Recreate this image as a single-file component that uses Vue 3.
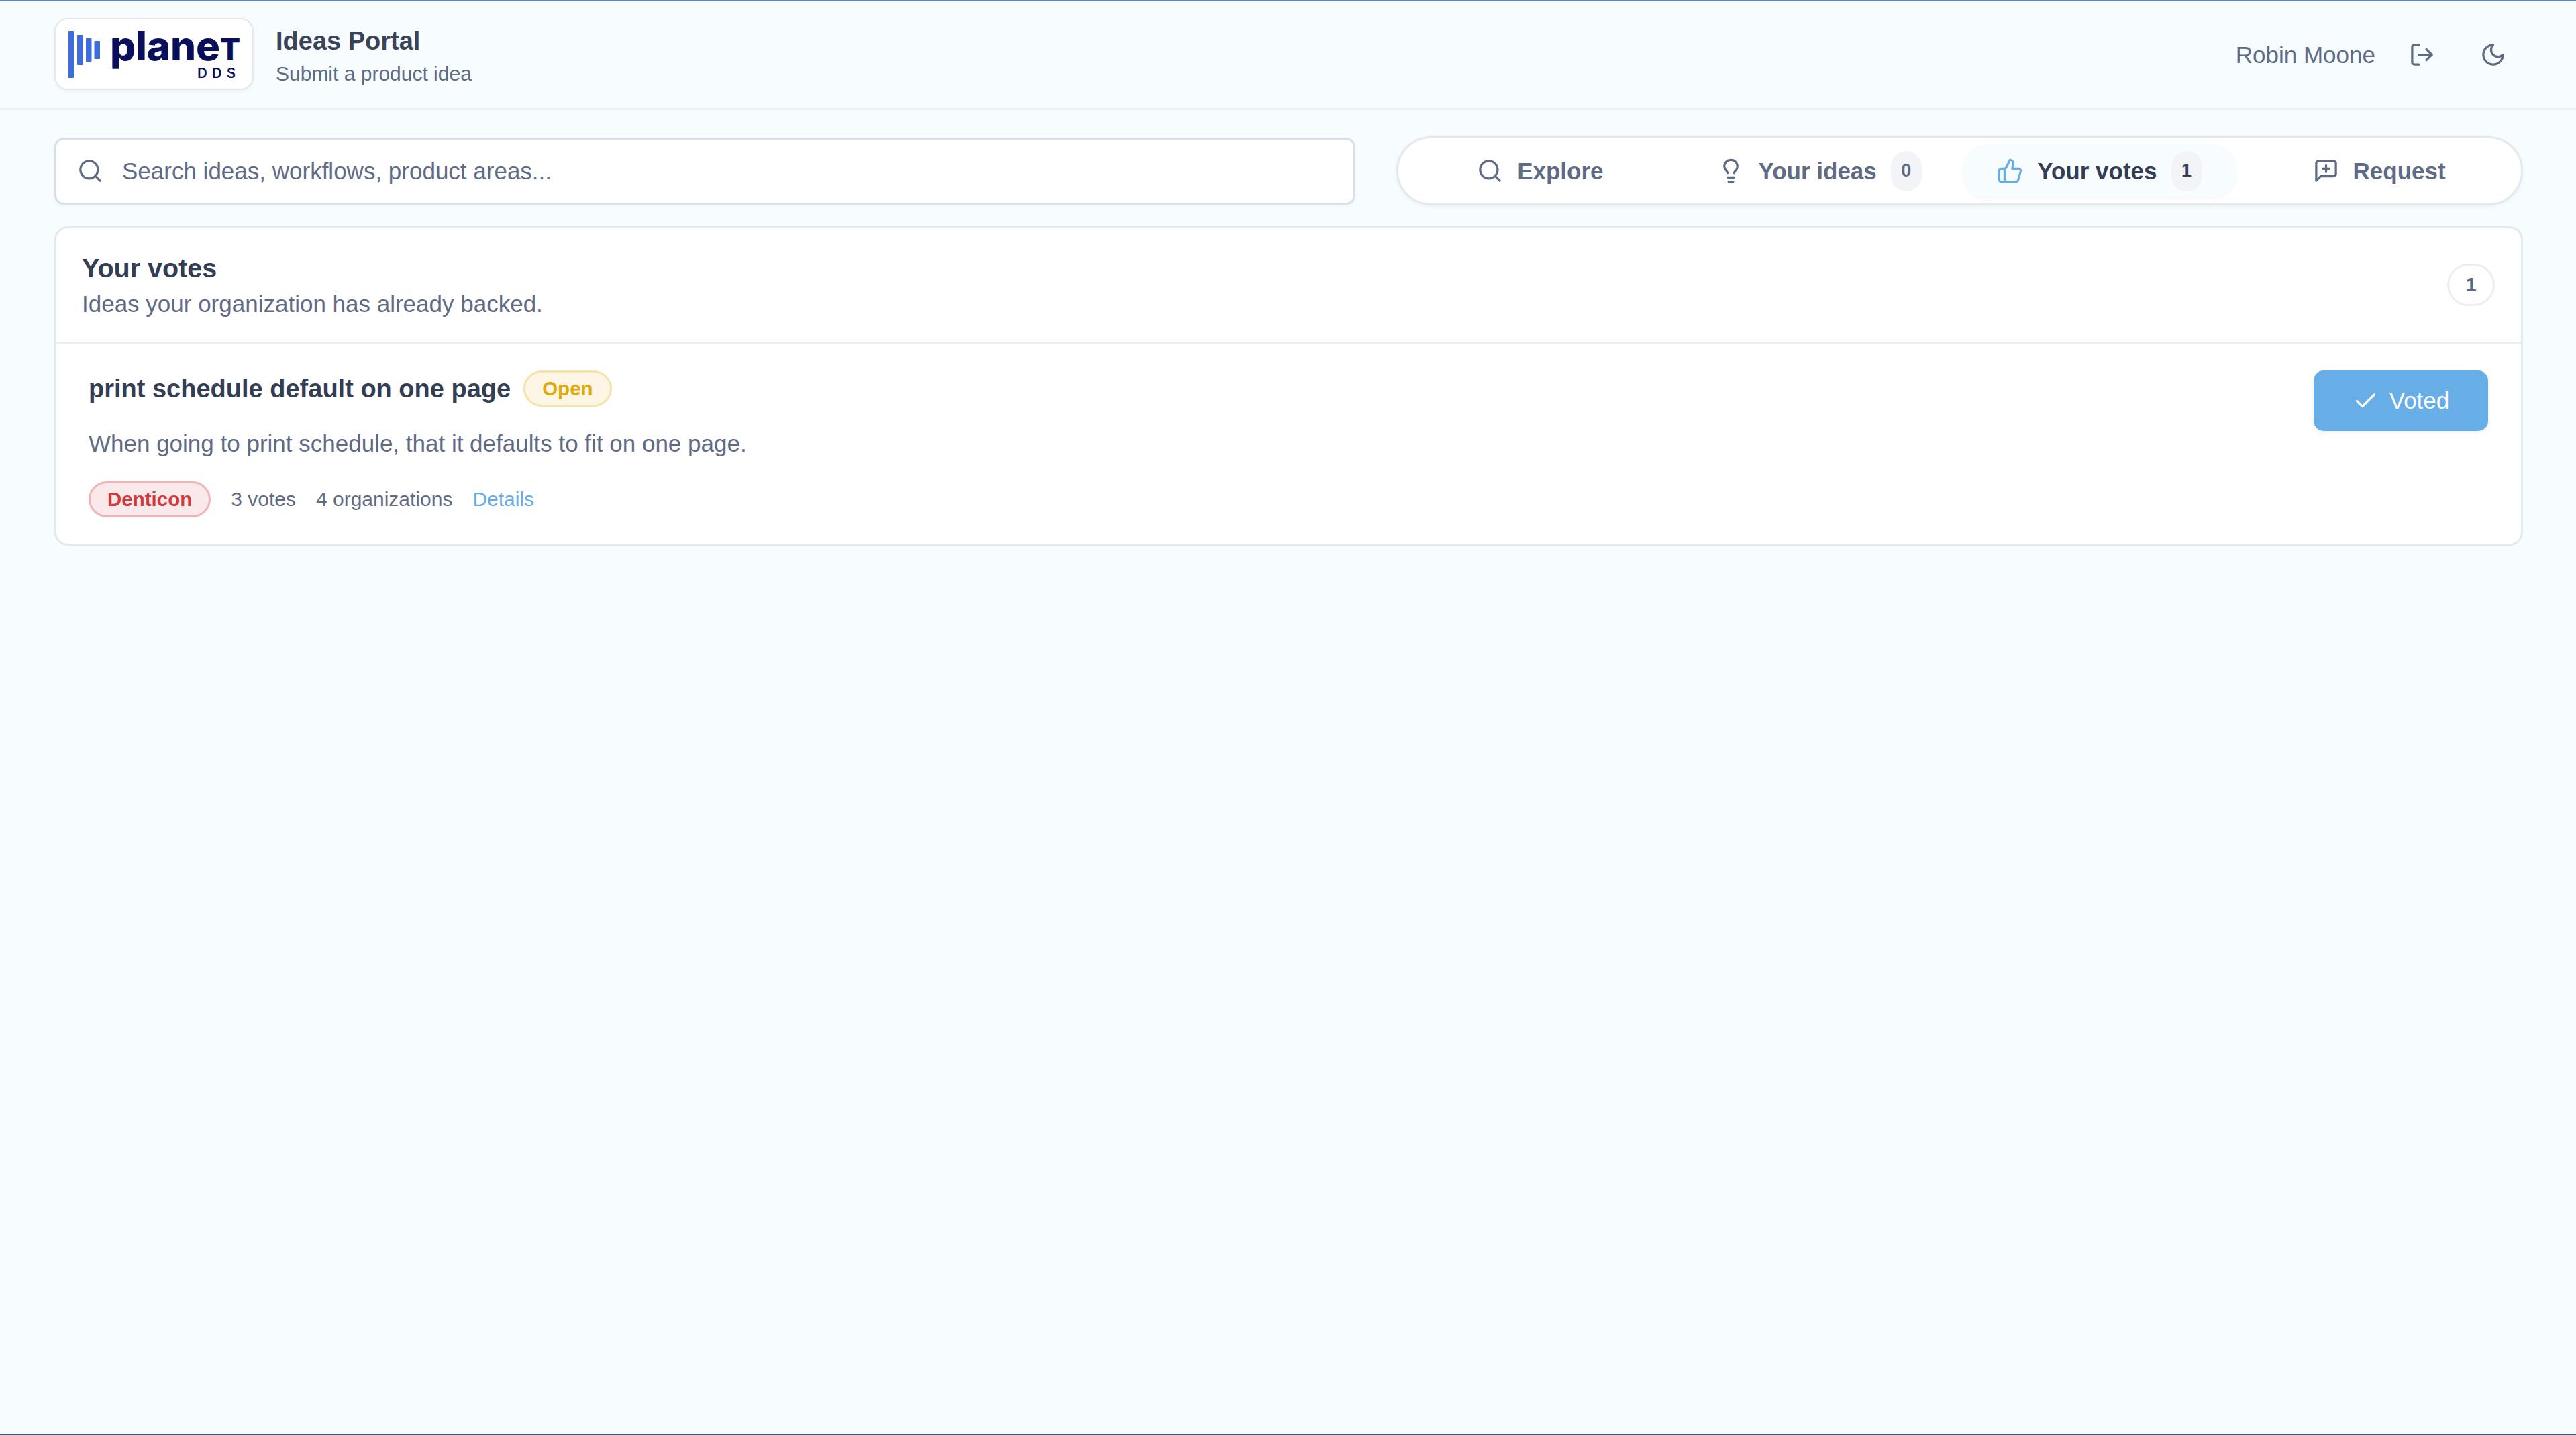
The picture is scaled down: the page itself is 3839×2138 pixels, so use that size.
<template>
  <div class="page">
    <header class="topbar">
      <div class="brand">
        <div class="logo">
          <svg class="logo-bars" viewBox="0 0 47 70" width="47" height="70">
            <rect x="0" y="0" width="8" height="70" rx="1" />
            <rect x="13" y="6" width="8.5" height="45" rx="1" />
            <rect x="26" y="11" width="8.5" height="35" rx="1" />
            <rect x="38.5" y="15" width="8.5" height="27" rx="1" />
          </svg>
          <div class="logo-text">
            <span class="logo-word">plane<span class="logo-t">T</span></span>
            <span class="logo-dds">DDS</span>
          </div>
        </div>
        <div class="brand-copy">
          <h1 class="brand-title">Ideas Portal</h1>
          <p class="brand-sub">Submit a product idea</p>
        </div>
      </div>
      <div class="user">
        <span class="user-name">Robin Moone</span>
        <button class="icon-btn" type="button" aria-label="Sign out">
          <svg class="icon" viewBox="0 0 24 24">
            <path d="M9 21H5a2 2 0 0 1-2-2V5a2 2 0 0 1 2-2h4" />
            <path d="M16 17l5-5-5-5" />
            <path d="M21 12H9" />
          </svg>
        </button>
        <button class="icon-btn" type="button" aria-label="Toggle theme">
          <svg class="icon" viewBox="0 0 24 24">
            <path d="M12 3a6 6 0 0 0 9 9 9 9 0 1 1-9-9Z" />
          </svg>
        </button>
      </div>
    </header>

    <main class="content">
      <div class="toolbar">
        <label class="search">
          <svg class="icon" viewBox="0 0 24 24">
            <circle cx="11" cy="11" r="8" />
            <path d="m21 21-4.3-4.3" />
          </svg>
          <input v-model="query" type="text" placeholder="Search ideas, workflows, product areas..." />
        </label>
        <nav class="tabs">
          <button
            v-for="tab in tabs"
            :key="tab.label"
            type="button"
            class="tab"
            :class="{ active: tab.label === current }"
            @click="current = tab.label"
          >
            <svg class="icon" viewBox="0 0 24 24">
              <path v-for="d in tab.paths" :key="d" :d="d" />
            </svg>
            <span>{{ tab.label }}</span>
            <span v-if="tab.count !== undefined" class="tab-count">{{ tab.count }}</span>
          </button>
        </nav>
      </div>

      <section class="card">
        <div class="card-head">
          <div>
            <h2 class="card-title">Your votes</h2>
            <p class="card-sub">Ideas your organization has already backed.</p>
          </div>
          <span class="card-count">1</span>
        </div>
        <article class="idea">
          <div class="idea-body">
            <div class="idea-title-row">
              <h3 class="idea-title">print schedule default on one page</h3>
              <span class="status">Open</span>
            </div>
            <p class="idea-desc">When going to print schedule, that it defaults to fit on one page.</p>
            <div class="idea-meta">
              <span class="product">Denticon</span>
              <span>3 votes</span>
              <span>4 organizations</span>
              <a class="details" href="#">Details</a>
            </div>
          </div>
          <button class="voted" type="button">
            <svg class="icon" viewBox="0 0 24 24">
              <path d="M20 6 9 17l-5-5" />
            </svg>
            Voted
          </button>
        </article>
      </section>
    </main>
  </div>
</template>

<script setup>
import { ref } from "vue";

const query = ref("");
const current = ref("Your votes");

const tabs = [
  {
    label: "Explore",
    paths: ["M19 11a8 8 0 1 1-16 0 8 8 0 0 1 16 0Z", "m21 21-4.3-4.3"],
  },
  {
    label: "Your ideas",
    count: 0,
    paths: [
      "M15 14c.2-1 .7-1.7 1.5-2.5 1-.9 1.5-2.2 1.5-3.5A6 6 0 0 0 6 8c0 1 .2 2.2 1.5 3.5.7.7 1.3 1.5 1.5 2.5",
      "M9 18h6",
      "M10 22h4",
    ],
  },
  {
    label: "Your votes",
    count: 1,
    paths: [
      "M7 10v12",
      "M15 5.88 14 10h5.83a2 2 0 0 1 1.92 2.56l-2.33 8A2 2 0 0 1 17.5 22H4a2 2 0 0 1-2-2v-8a2 2 0 0 1 2-2h2.76a2 2 0 0 0 1.79-1.11L12 2a3.13 3.13 0 0 1 3 3.88Z",
    ],
  },
  {
    label: "Request",
    paths: [
      "M21 15a2 2 0 0 1-2 2H7l-4 4V5a2 2 0 0 1 2-2h14a2 2 0 0 1 2 2z",
      "M12 7v6",
      "M9 10h6",
    ],
  },
];
</script>

<style>
html,
body {
  margin: 0;
  background: #f7fcff;
}
</style>

<style scoped>
.page {
  min-height: 100vh;
  box-sizing: border-box;
  background: #f7fcff;
  border-top: 2px solid #5b83bb;
  border-bottom: 2px solid #2f5a8f;
  font-family: "Liberation Sans", Arial, sans-serif;
  color: #5f6b85;
}

h1,
h2,
h3,
p {
  margin: 0;
}

button {
  font-family: inherit;
  border: none;
  background: none;
  cursor: pointer;
}

.icon {
  width: 39px;
  height: 39px;
  flex: none;
  fill: none;
  stroke: currentColor;
  stroke-width: 2;
  stroke-linecap: round;
  stroke-linejoin: round;
}

/* top bar */
.topbar {
  height: 159px;
  display: flex;
  align-items: center;
  justify-content: space-between;
  padding: 0 104px 0 81px;
  border-bottom: 3px solid #e9eef3;
}

.brand {
  display: flex;
  align-items: center;
  gap: 33px;
}

.logo {
  width: 297px;
  height: 107px;
  box-sizing: border-box;
  display: flex;
  align-items: flex-start;
  gap: 16px;
  margin-top: -2px;
  padding: 17px 0 0 19px;
  background: #fff;
  border: 2px solid #e4e8ef;
  border-radius: 20px;
  box-shadow: 0 2px 5px rgba(40, 60, 90, 0.06);
}

.logo-bars {
  flex: none;
  fill: #3f6bdc;
}

.logo-text {
  display: flex;
  flex-direction: column;
  align-items: flex-end;
  width: 193px;
  color: #0a0f5c;
}

.logo-word {
  font-family: Inter, "Liberation Sans", sans-serif;
  font-size: 60px;
  font-weight: 800;
  line-height: 44px;
  letter-spacing: -0.2px;
}

.logo-t {
  font-size: 45px;
}

.logo-dds {
  font-family: Inter, "Liberation Sans", sans-serif;
  font-size: 20.5px;
  font-weight: 600;
  line-height: 20px;
  letter-spacing: 7px;
  margin-top: 3px;
}

.brand-copy {
  margin-top: 4px;
}

.brand-title {
  font-size: 38px;
  line-height: 48px;
  font-weight: 700;
  color: #3a4459;
}

.brand-sub {
  font-size: 30px;
  line-height: 40px;
  margin-top: 5px;
}

.user {
  display: flex;
  align-items: center;
  font-size: 35px;
}

.icon-btn {
  display: flex;
  padding: 0;
  color: #5f6b85;
}

.icon-btn:first-of-type {
  margin-left: 50px;
}

.icon-btn + .icon-btn {
  margin-left: 67px;
}

/* search + tabs */
.content {
  padding: 39px 79px 0 81px;
}

.toolbar {
  display: grid;
  grid-template-columns: 1939px 1fr;
  gap: 61px;
  align-items: center;
}

.search {
  height: 100px;
  box-sizing: border-box;
  display: flex;
  align-items: center;
  gap: 28px;
  padding: 0 31px;
  background: #fff;
  border: 3px solid #d7e0e8;
  border-radius: 14px;
  box-shadow: 0 2px 5px rgba(40, 60, 90, 0.05);
}

.search input {
  flex: 1;
  min-width: 0;
  padding: 0;
  border: none;
  outline: none;
  background: none;
  font-family: inherit;
  font-size: 35px;
  color: #5f6b85;
}

.search input::placeholder {
  color: #5f6b85;
  opacity: 1;
}

.tabs {
  height: 103px;
  box-sizing: border-box;
  display: grid;
  grid-template-columns: repeat(4, 1fr);
  gap: 10px;
  align-items: center;
  padding: 0 8px;
  background: #fff;
  border: 3px solid #e4e8ef;
  border-radius: 52px;
  box-shadow: 0 2px 6px rgba(40, 60, 90, 0.06);
}

.tab {
  height: 80px;
  display: flex;
  align-items: center;
  justify-content: center;
  gap: 21px;
  padding: 0;
  font-size: 35px;
  font-weight: 700;
  color: #5f6b85;
  border-radius: 36px;
}

.tab.active {
  background: #f7fcff;
  color: #333d54;
  box-shadow: 0 2px 5px rgba(40, 60, 90, 0.05);
}

.tab.active .icon {
  color: #67ade6;
}

.tab-count {
  width: 46px;
  height: 60px;
  display: flex;
  align-items: center;
  justify-content: center;
  font-size: 27px;
  background: #f3f4f7;
  border-radius: 23px;
}

/* card */
.card {
  margin-top: 31px;
  background: #fff;
  border: 3px solid #e4e8ef;
  border-radius: 20px;
}

.card-head {
  height: 172px;
  box-sizing: border-box;
  display: flex;
  align-items: center;
  justify-content: space-between;
  padding: 0 39px 0 38px;
  border-bottom: 3px solid #eceef3;
}

.card-title {
  font-size: 39.5px;
  line-height: 50px;
  font-weight: 700;
  color: #333d54;
}

.card-sub {
  font-size: 35px;
  line-height: 44px;
  margin-top: 7px;
}

.card-count {
  width: 71px;
  height: 63px;
  box-sizing: border-box;
  display: flex;
  align-items: center;
  justify-content: center;
  font-size: 29px;
  font-weight: 700;
  border: 3px solid #eceef3;
  border-radius: 32px;
}

.idea {
  display: flex;
  justify-content: space-between;
  align-items: flex-start;
  padding: 40px 49px 39px 48px;
}

.idea-title-row {
  display: flex;
  align-items: center;
  gap: 19px;
}

.idea-title {
  font-size: 38px;
  line-height: 54px;
  font-weight: 700;
  color: #333d54;
}

.status {
  height: 54px;
  box-sizing: border-box;
  display: flex;
  align-items: center;
  padding: 0 25px;
  font-size: 29.5px;
  font-weight: 700;
  color: #e3a80f;
  background: #fdf6e5;
  border: 3px solid #f6e2ab;
  border-radius: 27px;
}

.idea-desc {
  font-size: 35px;
  line-height: 44px;
  margin-top: 33px;
}

.idea-meta {
  display: flex;
  align-items: center;
  gap: 30px;
  margin-top: 34px;
  font-size: 30px;
}

.product {
  height: 54px;
  box-sizing: border-box;
  display: flex;
  align-items: center;
  padding: 0 25px;
  font-size: 29.5px;
  font-weight: 700;
  color: #d03a3a;
  background: #f9e9ea;
  border: 3px solid #eeb4b6;
  border-radius: 27px;
}

.details {
  color: #67ade6;
  text-decoration: none;
}

.voted {
  width: 260px;
  height: 90px;
  display: flex;
  align-items: center;
  justify-content: center;
  gap: 16px;
  padding: 0;
  font-size: 35px;
  color: #fff;
  background: #67ade6;
  border-radius: 15px;
  box-shadow: 0 2px 6px rgba(40, 60, 90, 0.08);
}
</style>
